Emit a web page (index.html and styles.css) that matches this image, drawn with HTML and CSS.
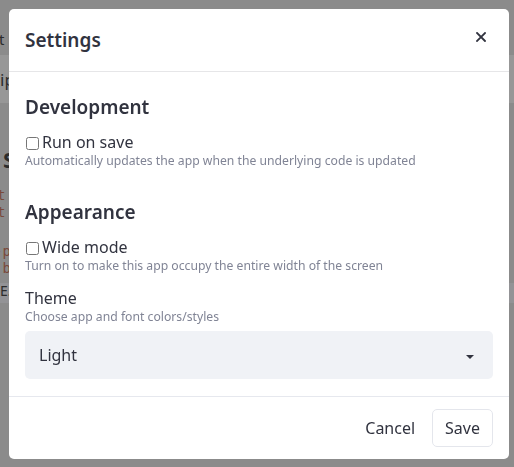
FILE: index.html
```html
<!DOCTYPE html>
<html lang="en">
<head>
  <meta charset="UTF-8" />
  <meta name="viewport" content="width=device-width, initial-scale=1.0" />
  <title>Settings</title>
  <link rel="stylesheet" href="styles.css">
</head>
<body>
  <!-- app page behind the dialog (dimmed) -->
  <div class="page">
    <p class="bg-line">t</p>
    <div class="bg-band">ip</div>
    <h2 class="bg-title">S</h2>
    <pre class="bg-code">t
t</pre>
    <pre class="bg-code bg-code-low">-p
.b</pre>
    <div class="bg-row">E..</div>
  </div>

  <div class="modal" role="dialog" aria-labelledby="settings-title">
    <header class="modal-header">
      <h1 id="settings-title" class="modal-title">Settings</h1>
      <button class="close-btn" aria-label="Close">
        <svg width="10" height="10" viewBox="0 0 10 10">
          <path d="M1 1 L9 9 M9 1 L1 9" stroke="#31333f" stroke-width="1.8" stroke-linecap="square" fill="none"/>
        </svg>
      </button>
    </header>

    <div class="modal-body">
      <section class="group">
        <h2 class="section-title">Development</h2>
        <label class="check"><input type="checkbox" />Run on save</label>
        <p class="caption">Automatically updates the app when the underlying code is updated</p>
      </section>

      <section class="group">
        <h2 class="section-title">Appearance</h2>
        <label class="check"><input type="checkbox" />Wide mode</label>
        <p class="caption">Turn on to make this app occupy the entire width of the screen</p>
      </section>

      <div class="field">
        <div class="field-label">Theme</div>
        <p class="caption">Choose app and font colors/styles</p>
        <div class="select">
          <span>Light</span>
          <svg class="caret" width="8" height="5" viewBox="0 0 8 5">
            <path d="M0 0 H8 L4 4 Z" fill="#31333f"/>
          </svg>
        </div>
      </div>
    </div>

    <footer class="modal-footer">
      <button class="btn btn-plain">Cancel</button>
      <button class="btn btn-outline">Save</button>
    </footer>
  </div>
</body>
</html>
```

FILE: styles.css
```css
* {
  box-sizing: border-box;
}

body {
  margin: 0;
  height: 467px;
  overflow: hidden;
  background-color: #8b8b8b;
  font-family: "Noto Sans", sans-serif;
  color: #31333f;
}

/* dimmed page underneath */
.page {
  padding-top: 29px;
  color: #2c2c2c;
}

.bg-line {
  margin: 0;
  font-size: 15px;
  line-height: 20px;
  text-indent: -1px;
}

.bg-band {
  margin-top: 6px;
  height: 48px;
  line-height: 50px;
  font-size: 17px;
  background-color: #979797;
}

.bg-title {
  margin: 44px 0 0 3px;
  font-size: 22px;
  line-height: 24px;
}

.bg-code {
  margin: 16px 0 0 -3px;
  font-family: "DejaVu Sans Mono", monospace;
  font-size: 14px;
  line-height: 17px;
  color: #7a4a3c;
}

.bg-code-low {
  margin-top: 22px;
  margin-left: -6px;
}

.bg-row {
  margin-top: 6px;
  height: 20px;
  line-height: 16px;
  font-size: 14px;
  background-color: #939396;
}

/* dialog */
.modal {
  position: fixed;
  top: 9px;
  left: 9px;
  width: 500px;
  height: 450px;
  background-color: #fff;
  border-radius: 5px;
  display: flex;
  flex-direction: column;
}

.modal-header {
  height: 63px;
  flex: none;
  display: flex;
  align-items: center;
  justify-content: space-between;
  padding: 0 23px 0 16px;
  border-bottom: 1px solid #e6e6e8;
}

.modal-title {
  margin: 0;
  font-size: 19px;
  font-weight: 600;
  line-height: 24px;
}

.close-btn {
  align-self: flex-start;
  margin-top: 23px;
  padding: 0;
  border: 0;
  background: none;
  width: 10px;
  height: 10px;
  display: flex;
}

.modal-body {
  flex: 1;
  padding: 23px 16px 16px;
  display: flex;
  flex-direction: column;
}

.group + .group {
  margin-top: 31px;
}

.section-title {
  margin: 0;
  font-size: 19px;
  font-weight: 600;
  line-height: 24px;
}

.check {
  margin-top: 13px;
  display: flex;
  align-items: center;
  font-size: 16px;
  line-height: 20px;
}

.check input {
  margin: 3px 3px 0 1px;
  width: 13px;
  height: 13px;
}

.caption {
  margin: 1px 0 0;
  font-size: 12.2px;
  line-height: 16px;
  color: #808495;
}

.field {
  margin-top: 14px;
}

.field-label {
  font-size: 16px;
  line-height: 20px;
}

.select {
  margin-top: 6px;
  height: 48px;
  padding: 0 19px 0 14px;
  display: flex;
  align-items: center;
  justify-content: space-between;
  background-color: #f0f2f6;
  border-radius: 5px;
  font-size: 16px;
  line-height: 24px;
}

.caret {
  margin-top: 4px;
}

.modal-footer {
  height: 63px;
  flex: none;
  display: flex;
  align-items: center;
  justify-content: flex-end;
  gap: 4px;
  padding: 0 16px;
  border-top: 1px solid #e6e8ee;
}

.btn {
  font-family: inherit;
  font-size: 16px;
  line-height: 24px;
  height: 38px;
  padding: 6px 12px;
  color: #31333f;
  background: #fff;
  border: 1px solid transparent;
  border-radius: 5px;
}

.btn-outline {
  border-color: #e4e6ec;
}
```
